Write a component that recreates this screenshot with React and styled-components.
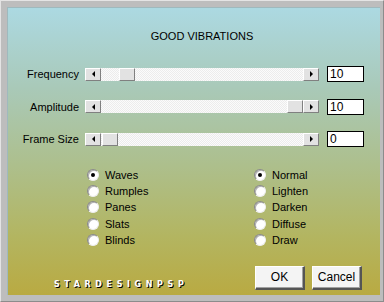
import React from "react";
import styled, { createGlobalStyle } from "styled-components";

const Global = createGlobalStyle`
  html, body { margin: 0; padding: 0; }
  body { width: 384px; height: 302px; overflow: hidden; font-family: "Liberation Sans", Arial, sans-serif; }
`;

const Frame = styled.div`
  width: 384px;
  height: 302px;
  box-sizing: border-box;
  background: #bdbdbd;
  padding: 6px;
  border-top: 1px solid #e4e4e4;
  border-left: 1px solid #e4e4e4;
  border-right: 1px solid #8c8c8c;
  border-bottom: 1px solid #8c8c8c;
  display: flex;
`;

const Panel = styled.div`
  flex: 1;
  box-sizing: border-box;
  background: linear-gradient(to bottom, #acd9e2 0%, #a9c9b8 28%, #adbf8c 55%, #b3b560 80%, #b9aa42 100%);
  padding: 21px 16px 0 0;
  display: flex;
  flex-direction: column;
  border-top: 1px solid #9fb9bd;
  border-left: 1px solid #9fb9bd;
`;

const Title = styled.div`
  font-size: 11px;
  line-height: 14px;
  text-align: center;
  color: #000;
  padding-left: 32px;
`;

const Sliders = styled.div`
  display: flex;
  flex-direction: column;
  gap: 16.5px;
  margin-top: 23px;
`;

const Row = styled.div`
  display: flex;
  align-items: center;
  height: 16px;
`;

const Label = styled.div`
  width: 71px;
  text-align: right;
  font-size: 11px;
  color: #000;
  margin-right: 6px;
`;

const Track = styled.div`
  width: 234px;
  height: 13px;
  display: flex;
  background-color: #fbfbfb;
  background-image: repeating-conic-gradient(#ececec 0 25%, #fbfbfb 0 50%);
  background-size: 2px 2px;
`;

const Bevel = styled.div`
  box-sizing: border-box;
  width: 16px;
  height: 13px;
  background: #e2e2e2;
  border-top: 1px solid #fff;
  border-left: 1px solid #fff;
  border-right: 1px solid #808080;
  border-bottom: 1px solid #808080;
  display: flex;
  align-items: center;
  justify-content: center;
  flex-shrink: 0;
`;

const Arrow = styled.div`
  width: 0;
  height: 0;
  border-top: 3px solid transparent;
  border-bottom: 3px solid transparent;
  ${(p) => (p.$dir === "left" ? "border-right: 3px solid #000;" : "border-left: 3px solid #000;")}
`;

const Channel = styled.div`
  flex: 1;
  display: flex;
`;

const Spacer = styled.div`
  flex-shrink: 0;
`;

const Value = styled.div`
  box-sizing: border-box;
  width: 37px;
  height: 16px;
  margin-left: 8px;
  background: #fff;
  border: 1px solid #000;
  font-size: 12px;
  line-height: 14px;
  padding-left: 2px;
  color: #000;
`;

const Radios = styled.div`
  display: grid;
  grid-template-columns: 167px auto;
  margin: 20px 0 0 79px;
`;

const Column = styled.div`
  display: flex;
  flex-direction: column;
`;

const Option = styled.div`
  display: flex;
  align-items: center;
  height: 16.2px;
  font-size: 11px;
  color: #000;
`;

const Circle = styled.div`
  box-sizing: border-box;
  width: 12px;
  height: 12px;
  border-radius: 50%;
  background: #fff;
  border-top: 1px solid #888;
  border-left: 1px solid #888;
  border-right: 1px solid #eee;
  border-bottom: 1px solid #eee;
  box-shadow: inset 1px 1px 0 #b0b0b0;
  margin-right: 6px;
  display: flex;
  align-items: center;
  justify-content: center;
  &::after {
    content: "";
    width: 4px;
    height: 4px;
    border-radius: 50%;
    background: ${(p) => (p.$on ? "#000" : "transparent")};
  }
`;

const Bottom = styled.div`
  display: flex;
  align-items: center;
  margin-top: 18px;
  padding: 0 2px 0 46px;
`;

const Logo = styled.div`
  font-family: "DejaVu Sans", sans-serif;
  font-weight: bold;
  font-size: 8px;
  letter-spacing: 4.6px;
  color: #fff;
  text-shadow: 1px 1px 0 #000;
  margin-top: 14px;
  flex: 1;
`;

const Button = styled.div`
  box-sizing: border-box;
  width: 50px;
  height: 24px;
  margin-left: 7px;
  background: #f4f4f4;
  border-top: 1px solid #fff;
  border-left: 1px solid #fff;
  border-right: 2px solid #555;
  border-bottom: 2px solid #555;
  box-shadow: inset -1px -1px 0 #a0a0a0;
  font-size: 12px;
  display: flex;
  align-items: center;
  justify-content: center;
  color: #000;
`;

const sliders = [
  { label: "Frequency", value: "10", pos: 18 },
  { label: "Amplitude", value: "10", pos: 186 },
  { label: "Frame Size", value: "0", pos: 1 },
];

const left = ["Waves", "Rumples", "Panes", "Slats", "Blinds"];
const right = ["Normal", "Lighten", "Darken", "Diffuse", "Draw"];

export default function App() {
  return (
    <>
      <Global />
      <Frame>
        <Panel>
          <Title>GOOD VIBRATIONS</Title>
          <Sliders>
            {sliders.map((s) => (
              <Row key={s.label}>
                <Label>{s.label}</Label>
                <Track>
                  <Bevel><Arrow $dir="left" /></Bevel>
                  <Channel>
                    <Spacer style={{ width: s.pos }} />
                    <Bevel />
                  </Channel>
                  <Bevel><Arrow $dir="right" /></Bevel>
                </Track>
                <Value>{s.value}</Value>
              </Row>
            ))}
          </Sliders>
          <Radios>
            <Column>
              {left.map((t, i) => (
                <Option key={t}><Circle $on={i === 0} />{t}</Option>
              ))}
            </Column>
            <Column>
              {right.map((t, i) => (
                <Option key={t}><Circle $on={i === 0} />{t}</Option>
              ))}
            </Column>
          </Radios>
          <Bottom>
            <Logo>STARDESIGNPSP</Logo>
            <Button>OK</Button>
            <Button>Cancel</Button>
          </Bottom>
        </Panel>
      </Frame>
    </>
  );
}
